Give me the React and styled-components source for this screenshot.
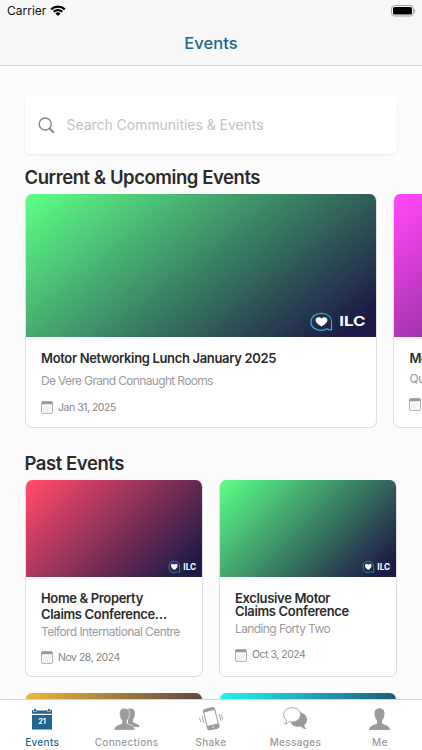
import React from "react";
import styled, { createGlobalStyle, ThemeProvider } from "styled-components";

const theme = {
  colors: {
    primary: "#236490",
    text: "#2b2b2b",
    muted: "#9b9b9b",
    border: "#dedede",
    background: "#fcfcfc",
    bar: "#f8f8f8",
    navy: "#1d1a47",
  },
};

const GlobalStyle = createGlobalStyle`
  * {
    box-sizing: border-box;
  }

  body {
    margin: 0;
    font-family: Inter, "Liberation Sans", sans-serif;
    overflow: hidden;
  }

  h1, h2, h3, p {
    margin: 0;
  }
`;

const Screen = styled.div`
  display: flex;
  flex-direction: column;
  width: 422px;
  height: 750px;
  overflow: hidden;
  background: ${(props) => props.theme.colors.background};
  color: ${(props) => props.theme.colors.text};
`;

const Header = styled.header`
  flex: none;
  height: 66px;
  background: ${(props) => props.theme.colors.bar};
  border-bottom: 1px solid #d9d9d9;
`;

const StatusBar = styled.div`
  display: flex;
  align-items: center;
  height: 22px;
  padding: 0 6px 0 7px;
  color: #111;
`;

const Carrier = styled.span`
  font-size: 12px;
  line-height: 22px;
  letter-spacing: 0;
  margin-right: 4px;
`;

const Battery = styled.svg`
  margin-left: auto;
`;

const Title = styled.h1`
  color: ${(props) => props.theme.colors.primary};
  font-size: 16.5px;
  font-weight: 500;
  line-height: 22px;
  margin-top: 10px;
  text-align: center;
  letter-spacing: 0.1px;
`;

const Content = styled.main`
  flex: 1;
  min-height: 0;
  overflow: hidden;
  padding: 30px 0 0 25px;
`;

const SearchBox = styled.div`
  display: flex;
  align-items: center;
  gap: 11.5px;
  width: 372px;
  height: 58px;
  padding-left: 13px;
  background: white;
  border-radius: 5px;
  box-shadow: 0 1px 2px rgba(0, 0, 0, 0.07), 0 0 14px rgba(0, 0, 0, 0.025);
`;

const SearchInput = styled.input`
  flex: 1;
  min-width: 0;
  padding: 0 0 1px;
  border: none;
  outline: none;
  background: none;
  font-family: inherit;
  font-size: 14px;
  letter-spacing: -0.04px;

  &::placeholder {
    color: #c3c3c6;
    opacity: 1;
  }
`;

const SectionTitle = styled.h2`
  font-size: 18.5px;
  font-weight: 600;
  line-height: 24px;
  letter-spacing: -0.44px;
  margin-top: ${(props) => props.$top}px;
  margin-left: -0.5px;
  margin-bottom: ${(props) => props.$bottom}px;
  white-space: nowrap;
`;

const Row = styled.div`
  display: flex;
  gap: 16.4px;
`;

const Grid = styled.div`
  display: grid;
  grid-template-columns: 178px 178px;
  gap: 16px;
`;

const Card = styled.article`
  flex: none;
  width: ${(props) => (props.$large ? "352px" : "178px")};
  height: ${(props) => (props.$large ? "234px" : "197px")};
  overflow: hidden;
  background: white;
  border: 1px solid ${(props) => props.theme.colors.border};
  border-top: none;
  border-radius: 7px;
`;

const Banner = styled.div`
  display: flex;
  align-items: flex-end;
  justify-content: flex-end;
  height: ${(props) => (props.$large ? "143px" : "97px")};
  padding: ${(props) => (props.$large ? "0 8px 5px 0" : "0 5px 3px 0")};
  background: linear-gradient(
    ${(props) => (props.$large ? "142deg" : "135deg")},
    ${(props) => props.$color} 3%,
    ${(props) => props.theme.colors.navy} 93%
  );
`;

const CardBody = styled.div`
  display: flex;
  flex-direction: column;
  padding: ${(props) => props.$top}px 0 0 15px;
  white-space: nowrap;
`;

const CardTitle = styled.h3`
  font-size: 13px;
  font-weight: 600;
  line-height: ${(props) => props.$leading}px;
  letter-spacing: -0.34px;
  white-space: pre-line;
`;

const Venue = styled.p`
  color: ${(props) => props.theme.colors.muted};
  font-size: 12px;
  line-height: 16px;
  letter-spacing: ${(props) => props.$tracking}px;
  margin-top: ${(props) => props.$top}px;
`;

const DateLine = styled.div`
  display: flex;
  align-items: center;
  gap: 5px;
  color: #858585;
  font-size: 10.5px;
  line-height: 14px;
  letter-spacing: -0.48px;
  margin-top: ${(props) => props.$top}px;
`;

const TabBar = styled.nav`
  display: grid;
  grid-template-columns: repeat(5, 1fr);
  flex: none;
  height: 51px;
  background: white;
  border-top: 1px solid #d4d4d4;
`;

const Tab = styled.button`
  display: flex;
  flex-direction: column;
  align-items: center;
  padding: 6px 0 0;
  border: none;
  background: none;
  color: ${(props) => (props.$active ? props.theme.colors.primary : "#9b9b9b")};
  font-family: inherit;
  font-size: 10px;
  font-weight: 500;
  line-height: 14px;
  letter-spacing: 0.32px;
  white-space: nowrap;
`;

const TabIcon = styled.span`
  display: flex;
  align-items: center;
  height: 25px;
  margin-bottom: 4px;
`;

const WifiIcon = () => (
  <svg width="16" height="12" viewBox="0 0 16 12">
    <path d="M.4 3.5a11 11 0 0 1 15.2 0l-1.6 1.7a8.7 8.7 0 0 0-12 0Z" />
    <path d="M2.9 6a7.4 7.4 0 0 1 10.2 0l-1.6 1.6a5.1 5.1 0 0 0-7 0Z" />
    <path d="M5.4 8.5a3.8 3.8 0 0 1 5.2 0L8 11.1Z" />
  </svg>
);

const BatteryIcon = () => (
  <Battery width="25" height="12" viewBox="0 0 25 12">
    <rect x=".6" y=".6" width="21.8" height="10.4" rx="3" fill="white" stroke="#999" />
    <rect x="2" y="2" width="19" height="7.6" rx="1.6" />
    <path d="M23.4 4v4c1.2-.5 1.2-3.5 0-4Z" fill="#888" />
  </Battery>
);

const SearchIcon = () => (
  <svg width="17" height="17" viewBox="0 0 17 17" fill="none" stroke="#858585">
    <circle cx="7.2" cy="7" r="6" strokeWidth="1.3" />
    <path d="m11.5 11.4 4.5 4.4" strokeWidth="1.9" />
  </svg>
);

const CalendarIcon = () => (
  <svg width="12" height="13" viewBox="0 0 12 13" fill="none">
    <rect x=".5" y=".6" width="11" height="11.8" rx="1.4" stroke="#b0b0b0" />
    <path d="M.5 3.2V2C.5 1 1 .6 2 .6h8c1 0 1.5.4 1.5 1.4v1.2Z" fill="#999" />
    <path d="M3 6h7M2 8h8M2 10h6" stroke="#c7c7c7" strokeDasharray="1 1" strokeWidth=".8" />
  </svg>
);

const EventsIcon = () => (
  <svg width="20" height="22" viewBox="0 0 20 22" fill="currentColor">
    <path d="M0 2h1.4v2h3V2h1v2h9V2h1v2h3V2H20v3.7H0ZM2 1h2v2.5H2zM16 1h2v2.5h-2zM5.5 2.5h9V4h-9z" />
    <path d="M0 7h20v14.5H0z" />
    <text x="10" y="16.3" fill="white" fontSize="7.2" fontWeight="700" textAnchor="middle" letterSpacing="0">
      21
    </text>
  </svg>
);

const person =
  "M10.5.3c3.7 0 5.2 2.5 5 5.8-.1 3-1.3 5-2.5 6.4v2.7c1.1 1.8 8 1.4 8 7.1H0c0-5.7 6.9-5.3 8-7.1v-2.7C6.8 11.1 5.6 9.1 5.5 6.1 5.3 2.8 6.8.3 10.5.3Z";

const ConnectionsIcon = () => (
  <svg width="26" height="22" viewBox="0 0 26 22" fill="currentColor">
    <path d="M14 1C18.6-.6 21.4 2 21 6.2c-.2 2.200-1 4-2 5.200v2.400c1 2 6.600 1.600 6.600 5.200H14Z" />
    <path d={person} stroke="white" strokeWidth=".6" />
  </svg>
);

const ShakeIcon = () => (
  <svg width="26" height="24" viewBox="0 0 26 24" fill="none" stroke="currentColor">
    <g transform="rotate(-14 13 12)">
      <rect x="7.5" y="1.2" width="11.5" height="21" rx="2" />
      <path d="M7.5 18.4H19v2q0 1.8-2 1.8h-7.5q-2 0-2-1.8ZM8 3.5V2.7q.2-1 1.5-1h7.3q1.6 0 1.8 1.8Z" fill="currentColor" />
      <circle cx="13.2" cy="20.3" r=".8" fill="white" stroke="none" />
    </g>
    <path d="m3.9 8.5 1.9 7.4M1.5 10.5l1.2 4.5M21 6.8l2.1 7.4M23.4 7.5l1.3 4.7" strokeWidth=".9" />
  </svg>
);

const MessagesIcon = () => (
  <svg width="25" height="23" viewBox="0 0 25 23" fill="currentColor">
    <path d="M16.5 5.2c4.6.7 7.6 3.7 7.6 7.2 0 2.5-1.2 4.3-2.9 5.5.2 1.7 1 3.1 2.4 4.1-2.2 0-4.2-.8-5.6-2.3-4.5.7-8.5-.8-10.2-3.8Z" />
    <path d="M9.2.7c4.8 0 8.4 3 8.4 7s-3.6 7.2-8.4 7.2c-.9 0-1.8-.1-2.6-.3-1.2 1.4-3 2.2-5 2.3 1.4-1 2-2.3 2-3.8C1.7 11.8.7 10 .7 7.7c0-4 3.7-7 8.5-7Z" fill="white" stroke="currentColor" strokeWidth=".9" />
  </svg>
);

const MeIcon = () => (
  <svg width="21" height="22" viewBox="0 0 21 22" fill="currentColor">
    <path d={person} />
  </svg>
);

const Logo = ({ large }) =>
  large ? (
    <svg width="58" height="20" viewBox="0 0 58 20">
      <path d="M21.500 17.800V10C21.500 4.900 17.800 1.400 11.500 1.400S1 5 1 10s4.100 8.300 10 8.300c2.400 0 4.400-.5 6-1.600 1.100 1 2.600 1.400 4.500 1.100Z" fill="none" stroke="#2cb5c9" strokeWidth="1.2" />
      <path d="M11.5 14.6C7.2 11.8 5.600 10.200 5.600 8c0-2.900 4.200-3.700 5.900-1.200C13.200 4.300 17.400 5.100 17.400 8c0 2.200-1.600 3.800-5.900 6.600Z" fill="white" />
      <text x="29.3" y="14.4" fill="white" fontSize="13.6" fontWeight="700" fontFamily="Inter" textLength="26.3" lengthAdjust="spacingAndGlyphs">
        ILC
      </text>
    </svg>
  ) : (
    <svg width="29" height="14" viewBox="0 0 29 14">
      <path d="M11.7 12.4V7C11.7 3.5 9.7 1.2 6.3 1.2S.9 3.6.9 7s2.1 5.6 5.2 5.6c1.2 0 2.3-.3 3.2-1 .7.6 1.4.9 2.4.8Z" fill="none" stroke="#258ea5" strokeWidth=".9" />
      <path d="M6.3 10.1C4 8.3 3 7.2 3 5.7c0-2 2.2-2.6 3.3-.9 1.1-1.7 3.3-1.1 3.3.9 0 1.5-1 2.6-3.3 4.4Z" fill="white" />
      <text x="15.3" y="10" fill="white" fontSize="9" fontWeight="700" fontFamily="Inter" textLength="13" lengthAdjust="spacingAndGlyphs">
        ILC
      </text>
    </svg>
  );

const upcoming = [
  {
    title: "Motor Networking Lunch January 2025",
    venue: "De Vere Grand Connaught Rooms",
    date: "Jan 31, 2025",
    color: "#5bf985",
    bodyTop: 12,
    leading: 18,
    venueTop: 6,
    venueTracking: -0.66,
    dateTop: 11.5,
  },
  {
    title: "Motor",
    venue: "Queens",
    date: "",
    color: "#ff46f5",
    bodyTop: 12,
    leading: 18,
    venueTop: 4,
    venueTracking: -0.4,
    dateTop: 11,
  },
];

const past = [
  {
    title: "Home & Property\nClaims Conference…",
    venue: "Telford International Centre",
    date: "Nov 28, 2024",
    color: "#ff4969",
    bodyTop: 13,
    leading: 16,
    venueTop: 1.5,
    venueTracking: -0.58,
    dateTop: 11,
  },
  {
    title: "Exclusive Motor\nClaims Conference",
    venue: "Landing Forty Two",
    date: "Oct 3, 2024",
    color: "#5bf985",
    bodyTop: 14.5,
    leading: 13.5,
    venueTop: 2.5,
    venueTracking: -0.6,
    dateTop: 11,
  },
  { color: "#ebb43a" },
  { color: "#22f0f1" },
];

const tabs = [
  { label: "Events", Icon: EventsIcon },
  { label: "Connections", Icon: ConnectionsIcon },
  { label: "Shake", Icon: ShakeIcon },
  { label: "Messages", Icon: MessagesIcon },
  { label: "Me", Icon: MeIcon },
];

function EventCard({ event, large }) {
  return (
    <Card $large={large}>
      <Banner $large={large} $color={event.color}>
        <Logo large={large} />
      </Banner>
      {event.title && (
        <CardBody $top={event.bodyTop}>
          <CardTitle $leading={event.leading}>{event.title}</CardTitle>
          <Venue $top={event.venueTop} $tracking={event.venueTracking}>
            {event.venue}
          </Venue>
          <DateLine $top={event.dateTop}>
            <CalendarIcon />
            {event.date}
          </DateLine>
        </CardBody>
      )}
    </Card>
  );
}

function App() {
  return (
    <ThemeProvider theme={theme}>
      <GlobalStyle />
      <Screen>
        <Header>
          <StatusBar>
            <Carrier>Carrier</Carrier>
            <WifiIcon />
            <BatteryIcon />
          </StatusBar>
          <Title>Events</Title>
        </Header>
        <Content>
          <SearchBox>
            <SearchIcon />
            <SearchInput placeholder="Search Communities & Events" />
          </SearchBox>
          <SectionTitle $top={11} $bottom={5}>
            Current & Upcoming Events
          </SectionTitle>
          <Row>
            {upcoming.map((event) => (
              <EventCard key={event.title} event={event} large />
            ))}
          </Row>
          <SectionTitle $top={23} $bottom={5}>
            Past Events
          </SectionTitle>
          <Grid>
            {past.map((event) => (
              <EventCard key={event.color} event={event} />
            ))}
          </Grid>
        </Content>
        <TabBar>
          {tabs.map(({ label, Icon }) => (
            <Tab key={label} $active={label === "Events"}>
              <TabIcon>
                <Icon />
              </TabIcon>
              {label}
            </Tab>
          ))}
        </TabBar>
      </Screen>
    </ThemeProvider>
  );
}

export default App;
